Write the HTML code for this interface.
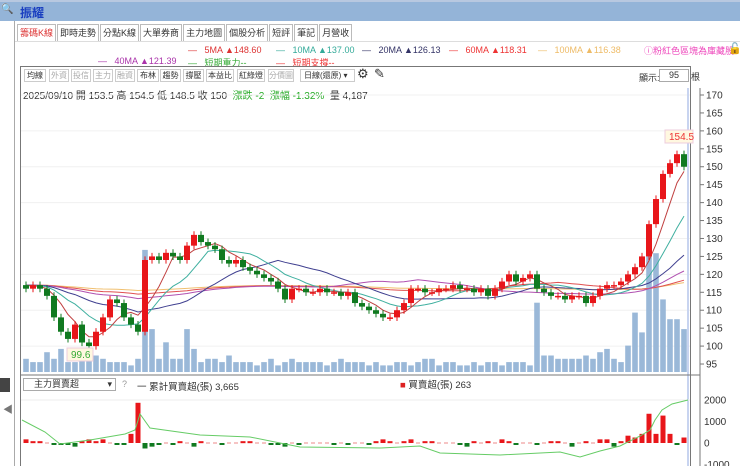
<!DOCTYPE html>
<html><head><meta charset="utf-8">
<style>
*{margin:0;padding:0;box-sizing:border-box}
body{width:740px;height:466px;overflow:hidden;background:#fff;font-family:"Liberation Sans","Noto Sans CJK TC",sans-serif;position:relative;font-size:11px;color:#333}
.abs{position:absolute}
#title{left:0;top:0;width:740px;height:21px;background:#94b4d8;border-top:2px solid #b8c8e0}
#title .t{left:20px;top:2px;color:#1a3fc0;font-weight:bold;font-size:12px}
#left{left:0;top:21px;width:15px;height:445px;background:#fff;border-right:1px solid #aaa}
.tabs{left:17px;top:24px;height:17px;display:flex}
.tab{border:1px solid #bbb;border-bottom:none;padding:0 2px;height:17px;line-height:16px;font-size:9px;color:#333;background:#fff;margin-right:1px}
.tab.on{color:#d33}
.leg{font-size:9px;white-space:nowrap}
.tb span{position:absolute;top:69px;height:13px;border:1px solid #ccc;font-size:8px;line-height:11px;text-align:center;color:#333}
.tb span.g{color:#aaa}
</style></head><body>
<div id="title" class="abs"><span class="abs" style="left:1px;top:2px;font-size:10px">🔍</span><span class="abs t">振耀</span></div>
<div id="left" class="abs"><div class="abs" style="left:0;top:357px;width:10px;height:14px;background:#444"></div><div class="abs" style="left:3px;top:380px;color:#777;font-size:10px">◀</div></div>
<div class="abs tabs"><div class="tab on">籌碼K線</div><div class="tab">即時走勢</div><div class="tab">分點K線</div><div class="tab">大單券商</div><div class="tab">主力地圖</div><div class="tab">個股分析</div><div class="tab">短評</div><div class="tab">筆記</div><div class="tab">月營收</div></div>
<div class="abs" style="left:15px;top:41px;width:725px;height:1px;background:#ddd"></div>
<div class="abs leg" style="left:188px;top:45px;color:#d33">— &nbsp;&nbsp;5MA ▲148.60</div>
<div class="abs leg" style="left:276px;top:45px;color:#3a9">— &nbsp;&nbsp;10MA ▲137.00</div>
<div class="abs leg" style="left:362px;top:45px;color:#336">— &nbsp;&nbsp;20MA ▲126.13</div>
<div class="abs leg" style="left:449px;top:45px;color:#e33">— &nbsp;&nbsp;60MA ▲118.31</div>
<div class="abs leg" style="left:538px;top:45px;color:#eb6">— &nbsp;&nbsp;100MA ▲116.38</div>
<div class="abs leg" style="left:644px;top:44px;color:#e4b">ⓘ粉紅色區塊為庫藏股</div>
<div class="abs" style="left:728px;top:42px;font-size:11px">🔓</div>
<div class="abs leg" style="left:98px;top:56px;color:#a3a">— &nbsp;&nbsp;40MA ▲121.39</div>
<div class="abs leg" style="left:188px;top:56px;color:#3a3">— &nbsp;&nbsp;短期重力--</div>
<div class="abs leg" style="left:276px;top:56px;color:#e33">— &nbsp;&nbsp;短期支撐--</div>
<div class="abs" style="left:20px;top:66px;width:671px;height:400px;border:1px solid #777;border-bottom:none"></div>
<div class="tb">
<span style="left:24px;width:22px">均線</span><span class="g" style="left:49px;width:20px">外資</span><span class="g" style="left:71px;width:20px">投信</span><span class="g" style="left:93px;width:20px">主力</span><span class="g" style="left:115px;width:20px">融資</span><span style="left:137px;width:22px">布林</span><span style="left:160px;width:21px">趨勢</span><span style="left:183px;width:21px">撐壓</span><span style="left:206px;width:28px">本益比</span><span style="left:237px;width:28px">紅綠燈</span><span class="g" style="left:268px;width:26px">分價圖</span><span style="left:300px;width:55px;text-align:left;padding-left:3px">日線(還原) ▾</span></div>
<div class="abs" style="left:357px;top:66px;font-size:13px">⚙</div>
<div class="abs" style="left:374px;top:66px;font-size:13px">✎</div>
<div class="abs" style="left:639px;top:71px;font-size:9px">顯示:</div>
<div class="abs" style="left:659px;top:69px;width:30px;height:13px;border:1px solid #aaa;font-size:9px;text-align:center;line-height:11px">95</div>
<div class="abs" style="left:691px;top:70px;font-size:9px">根</div>
<div class="abs" style="left:23px;top:87px;font-size:10px;white-space:nowrap">2025/09/10 開 153.5 高 154.5 低 148.5 收 150 &nbsp;<span style="color:#2a2">漲跌 -2 &nbsp;漲幅 -1.32%</span> &nbsp;量 4,187</div>
<div class="abs" style="left:23px;top:378px;width:93px;height:13px;border:1px solid #aaa;font-size:9px;line-height:11px;padding-left:10px">主力買賣超 <span style="float:right;padding-right:3px">▾</span></div>
<div class="abs" style="left:122px;top:379px;font-size:9px;color:#999">?</div>
<div class="abs" style="left:137px;top:379px;font-size:9.5px">一 累計買賣超(張) 3,665</div>
<div class="abs" style="left:400px;top:377px;font-size:9.5px"><span style="color:#d22">■</span> 買賣超(張) 263</div>
<svg id="s" class="abs" style="left:0;top:0" width="740" height="466"></svg>
<script>
var C=[116,117,116,114,108,104,102,106,101,100,104,108,113,112,108,106,104,124,125,124,126,125,124,128,131,129,128,127,124,123,124,122,121,120,119,118,116,113,116,116,115,115,116,115,115,114,115,112,111,110,109,108,108,110,112,116,116,115,115,116,116,117,116,116,115,116,114,116,118,120,118,119,120,116,115,114,114,113,114,114,112,114,116,117,117,118,120,122,125,134,141,148,151,153.5,150];
var V=[4,3,3,6,4,7,3,3,7,4,5,4,3,3,3,2,4,37,13,4,9,4,4,13,7,3,4,4,3,5,3,3,3,2,3,4,2,3,4,3,3,3,3,2,3,4,3,3,3,2,3,2,2,3,3,2,3,4,4,2,3,3,2,2,3,2,3,3,2,3,3,3,2,21,5,5,4,4,4,4,5,4,6,7,4,3,8,18,12,36,36,22,16,16,13];
var F=[2,1,1,0,-1,-1,-1,-2,1,2,1,2,0,-1,-1,5,22,-3,-2,-1,0,-1,1,0,-2,1,0,0,-1,0,0,1,1,0,0,-1,-1,-2,0,-1,0,0,0,0,-1,0,-1,0,0,-1,1,2,1,0,1,2,0,1,1,0,0,0,-1,-2,1,0,1,0,2,1,-1,0,0,-1,0,1,1,0,-2,0,1,0,2,2,-2,1,4,3,5,16,5,15,5,-1,3];
var N=C.length,x0=26,dx=(684-x0)/(N-1);
function py(p){return 95+(170-p)*3.587}
var h='';
[170,160,150,140,130,120,110,100].forEach(function(p){h+='<line x1="21" x2="690" y1="'+py(p)+'" y2="'+py(p)+'" stroke="#f0f0f0"/>'});
[95,100,105,110,115,120,125,130,135,140,145,150,155,160,165,170].forEach(function(p){var y=py(p);h+='<line x1="700" x2="704" y1="'+y+'" y2="'+y+'" stroke="#777"/><text x="706" y="'+(y+3.5)+'" font-size="10" fill="#333">'+p+'</text>'});
h+='<line x1="700" x2="700" y1="88" y2="466" stroke="#777"/>';
h+='<line x1="688" x2="688" y1="88" y2="466" stroke="#c8d4f0" stroke-width="2"/>';
for(var i=0;i<N;i++){var x=x0+i*dx,vh=V[i]*3.3;h+='<rect x="'+(x-2.8)+'" y="'+(372-vh)+'" width="5.6" height="'+vh+'" fill="#9ab8d8"/>'}
function ma(n,col){var d='';for(var i=0;i<N;i++){var s=0,c=0;for(var j=Math.max(0,i-n+1);j<=i;j++){s+=C[j];c++}var base=117;var v=(s+(n-c)*base)/n;d+=(i?'L':'M')+(x0+i*dx).toFixed(1)+' '+py(v).toFixed(1)}h+='<path d="'+d+'" fill="none" stroke="'+col+'" stroke-width="1"/>'}
ma(100,'#f0c070');ma(60,'#e05050');ma(40,'#b050b0');ma(20,'#404090');ma(10,'#40b0a0');ma(5,'#c04040');
for(var i=0;i<N;i++){var x=x0+i*dx,o=i?C[i-1]:C[0]+1,c=C[i];if(i==N-1)o=153.5;var up=c>=o,col=up?'#e8161a':'#107a20';var hi=Math.max(o,c)+1,lo=Math.min(o,c)-1;h+='<line x1="'+x+'" x2="'+x+'" y1="'+py(hi)+'" y2="'+py(lo)+'" stroke="'+col+'"/>';var y1=py(Math.max(o,c)),y2=py(Math.min(o,c));h+='<rect x="'+(x-3)+'" y="'+y1+'" width="6" height="'+Math.max(1.5,y2-y1)+'" fill="'+col+'"/>'}
h+='<rect x="665" y="130" width="28" height="13" fill="#fff8e0" stroke="#ecd"/><text x="669" y="140" font-size="10" fill="#e33">154.5</text>';
h+='<rect x="67" y="348" width="26" height="13" fill="#fff8e0" stroke="#ecd"/><text x="71" y="358" font-size="10" fill="#3a3">99.6</text>';
h+='<line x1="20" x2="700" y1="375" y2="375" stroke="#777"/>';
function ly(v){return 443-v*0.0215}
h+='<line x1="21" x2="690" y1="'+ly(2000)+'" y2="'+ly(2000)+'" stroke="#eee"/>';
[[2000,'2000'],[1000,'1000'],[0,'0'],[-1000,'-1000']].forEach(function(a){h+='<text x="704" y="'+(ly(a[0])+3.5)+'" font-size="10" fill="#333">'+a[1]+'</text>'});
for(var i=0;i<N;i++){var x=x0+i*dx,v=F[i]*85,col=v>=0?'#e8161a':'#107a20';if(v==0){h+='<rect x="'+(x-2)+'" y="'+(ly(0)-0.5)+'" width="4" height="1" fill="#e88"/>';continue}var y1=Math.min(ly(0),ly(v)),hh=Math.max(2,Math.abs(ly(v)-ly(0)));h+='<rect x="'+(x-2.5)+'" y="'+y1+'" width="5" height="'+hh+'" fill="'+col+'"/>'}
var pts=[[22,420],[45,432],[60,444],[90,440],[125,434],[135,430],[140,414],[150,428],[200,435],[250,437],[300,447],[380,448],[420,446],[440,453],[500,455],[560,452],[580,457],[600,451],[620,446],[640,436],[650,430],[655,420],[662,410],[672,404],[688,400]];
var d='M'+pts.map(function(p){return p.join(' ')}).join('L');
h+='<path d="'+d+'" fill="none" stroke="#6c6" stroke-width="1"/>';
document.getElementById('s').innerHTML=h;
</script>
</body></html>
